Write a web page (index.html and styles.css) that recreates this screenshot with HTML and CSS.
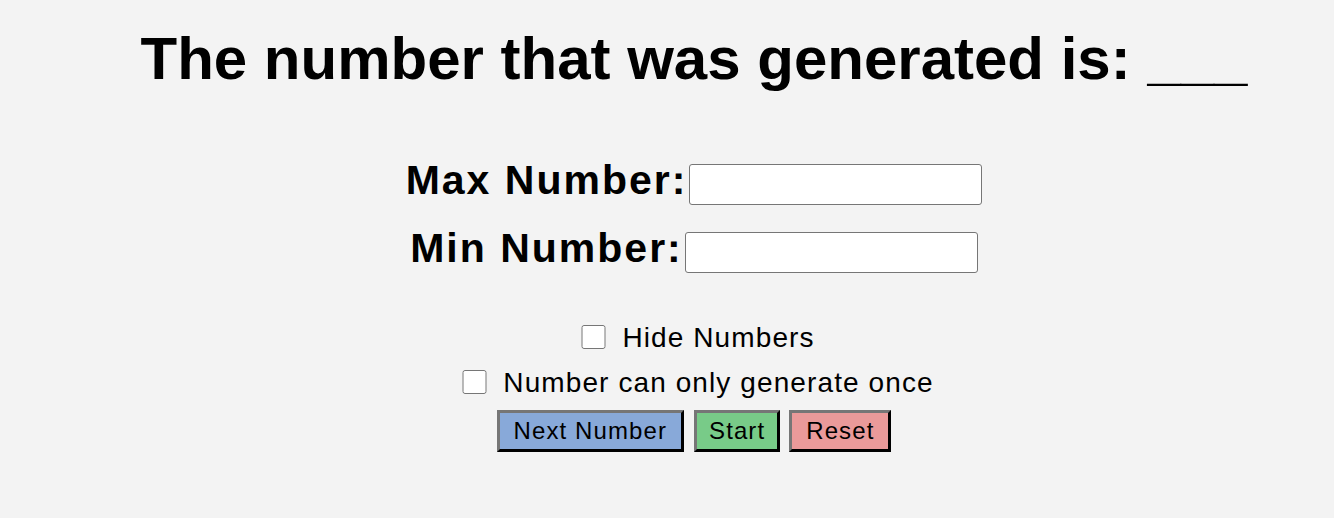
FILE: index.html
```html
<!DOCTYPE html>
<html>
<head>
<meta charset="utf-8">
<link rel="stylesheet" href="styles.css">
</head>
<body>
<main class="page">
  <h1 class="title">The number that was generated is: ___</h1>
  <div class="fields">
    <div class="field"><label class="field-label">Max Number:</label><input class="field-input" type="text"></div>
    <div class="field"><label class="field-label">Min Number:</label><input class="field-input" type="text"></div>
  </div>
  <div class="options">
    <label class="option"><input class="check" type="checkbox"><span>Hide Numbers</span></label>
    <label class="option"><input class="check" type="checkbox"><span>Number can only generate once</span></label>
  </div>
  <div class="actions">
    <button class="btn btn-next">Next Number</button>
    <button class="btn btn-start">Start</button>
    <button class="btn btn-reset">Reset</button>
  </div>
</main>
</body>
</html>
```
FILE: styles.css
```css
html, body {
  margin: 0;
  padding: 0;
  background: #f3f3f3;
}
body {
  font-family: "Liberation Sans", Arial, Helvetica, sans-serif;
  color: #000;
}
.page {
  display: flex;
  flex-direction: column;
  align-items: center;
  padding-left: 54px;
}
.title {
  margin: 24px 0 0;
  font-size: 60px;
  font-weight: bold;
  line-height: 69px;
  white-space: nowrap;
}
.fields {
  display: flex;
  flex-direction: column;
  align-items: center;
  gap: 27px;
  margin-top: 71px;
}
.field {
  display: flex;
  align-items: center;
}
.field-label {
  font-size: 41px;
  font-weight: bold;
  letter-spacing: 2px;
  line-height: 46px;
  margin-top: -10px;
}
.field-input {
  box-sizing: border-box;
  width: 293px;
  height: 41px;
  margin: 0 0 0 2px;
  border: 1px solid #767676;
  border-radius: 3px;
  background: #fff;
  font-size: 20px;
}
.options {
  display: flex;
  flex-direction: column;
  align-items: center;
  gap: 14px;
  margin: 49px 0 0 8px;
}
.option {
  display: flex;
  align-items: center;
  font-size: 28px;
  letter-spacing: 1.1px;
  line-height: 31px;
}
.check {
  width: 25px;
  height: 24px;
  margin: -2px 16px 0 0;
}
.actions {
  display: flex;
  gap: 9px;
  margin-top: 12px;
}
.btn {
  box-sizing: border-box;
  height: 42px;
  padding: 0 14px;
  border: 3px outset #767676;
  border-color: #767676 #222 #222 #767676;
  font-family: "Liberation Sans", Arial, Helvetica, sans-serif;
  font-size: 24px;
  letter-spacing: 1.1px;
  color: #000;
}
.btn-next { background: #88a9d9; margin-right: 1px; }
.btn-start { background: #78cb88; padding: 0 12px; }
.btn-reset { background: #ea9a9a; }
```
